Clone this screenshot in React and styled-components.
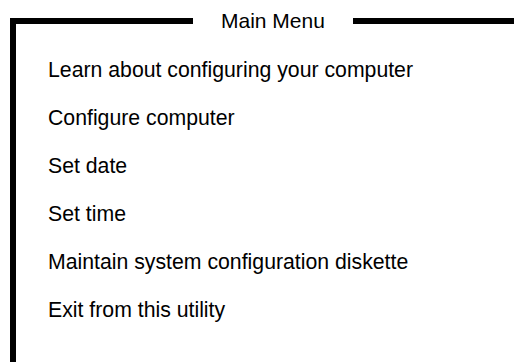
import React from 'react';
import styled, { createGlobalStyle } from 'styled-components';

const GlobalStyle = createGlobalStyle`
  html, body {
    margin: 0;
    padding: 0;
    background: #fff;
    overflow: hidden;
  }
  body {
    font-family: "Liberation Sans", Arial, sans-serif;
    color: #000;
  }
`;

const Screen = styled.div`
  width: 514px;
  height: 362px;
  overflow: hidden;
  box-sizing: border-box;
  padding: 9px 0 0 10px;
`;

const Frame = styled.fieldset`
  margin: 0;
  min-width: 0;
  min-height: 420px;
  box-sizing: border-box;
  border: 6px solid #000;
  border-right: none;
  border-bottom: none;
  padding: 0 0 0 32px;
`;

const Title = styled.legend`
  margin-left: 145px;
  padding: 0 28px;
  font-size: 21px;
  line-height: normal;
`;

const Menu = styled.ul`
  list-style: none;
  margin: 0;
  padding: 13px 0 0;
`;

const Item = styled.li`
  font-size: 21.25px;
  line-height: 48px;
  white-space: nowrap;
  cursor: default;
`;

const items = [
  'Learn about configuring your computer',
  'Configure computer',
  'Set date',
  'Set time',
  'Maintain system configuration diskette',
  'Exit from this utility',
];

export default function App() {
  return (
    <>
      <GlobalStyle />
      <Screen>
        <Frame>
          <Title>Main Menu</Title>
          <Menu>
            {items.map((t) => (
              <Item key={t}>{t}</Item>
            ))}
          </Menu>
        </Frame>
      </Screen>
    </>
  );
}
